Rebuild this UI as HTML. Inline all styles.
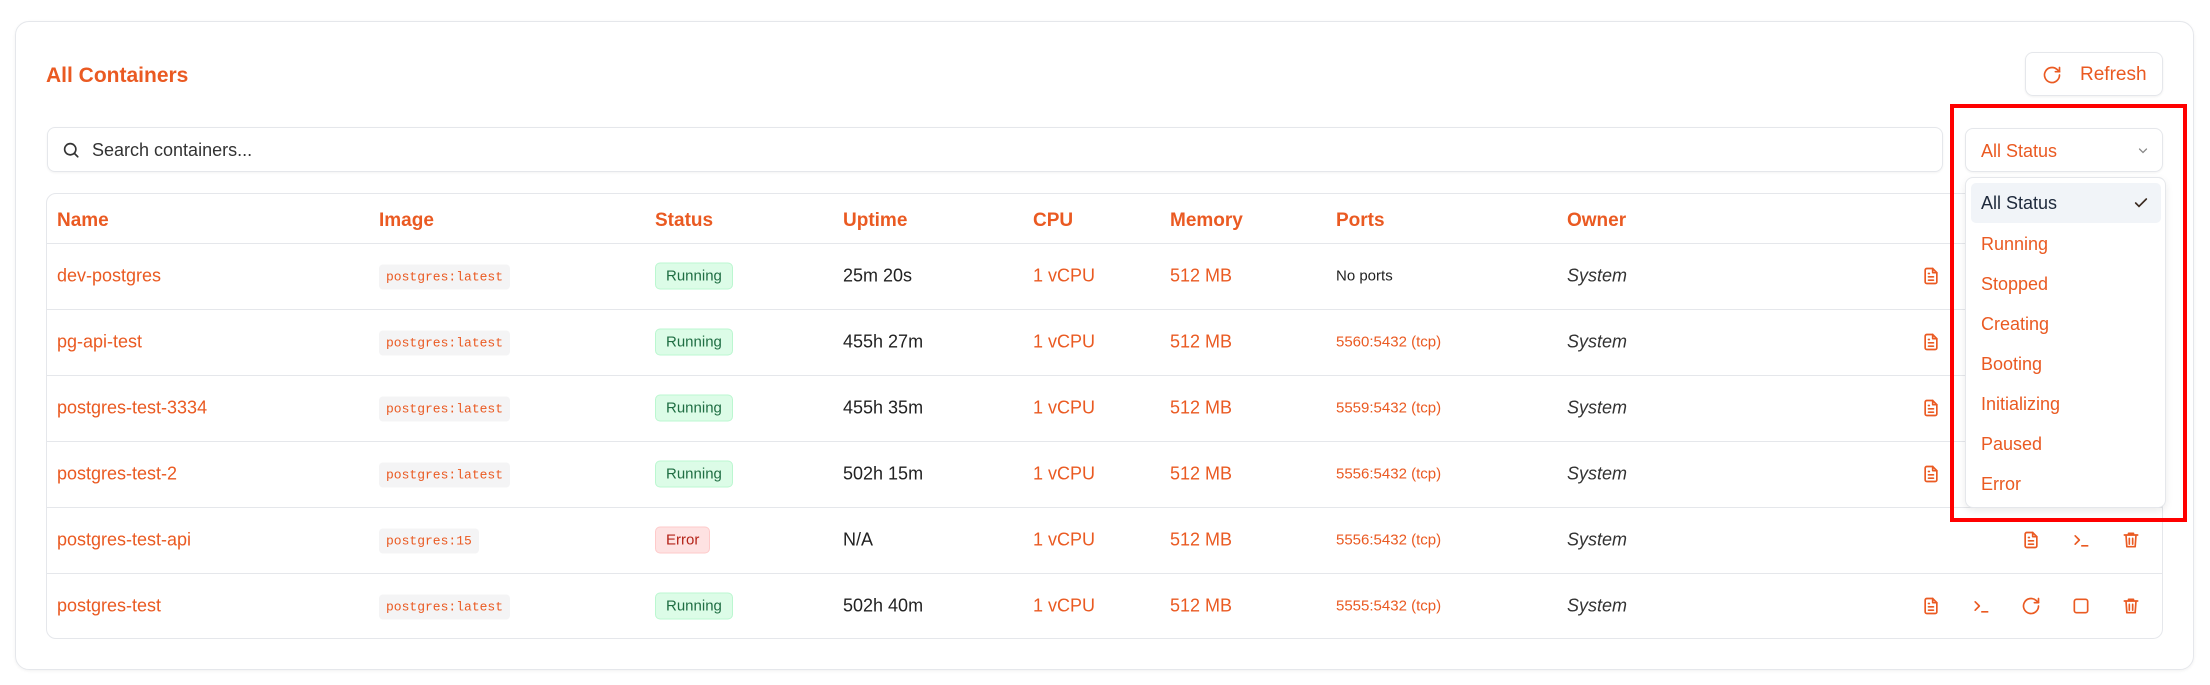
<!DOCTYPE html>
<html><head><meta charset="utf-8"><style>
*{box-sizing:border-box;margin:0;padding:0}
body{width:2210px;height:685px;background:#fff;font-family:"Liberation Sans",sans-serif;position:relative;overflow:hidden;color:#222}
.card{position:absolute;left:15px;top:21px;width:2179px;height:649px;border:1px solid #e5e7eb;border-radius:14px;box-shadow:0 1px 3px rgba(0,0,0,.06)}
.o{color:#ea5a22}
.abs{position:absolute}
.title{left:46px;top:64px;font-size:21px;font-weight:600;color:#ea5a22}
.btn{left:2025px;top:52px;width:138px;height:44px;border:1px solid #e5e7eb;border-radius:8px;box-shadow:0 1px 2px rgba(0,0,0,.06);color:#ea5a22;font-size:19px}
.search{left:47px;top:127px;width:1896px;height:45px;border:1px solid #e5e7eb;border-radius:8px;box-shadow:0 1px 2px rgba(0,0,0,.05);font-size:18px;color:#333}
.table{left:46px;top:193px;width:2117px;height:446px;border:1px solid #e5e7eb;border-radius:10px}
.hl{position:absolute;left:0;right:0;height:1px;background:#e5e7eb}
.th{position:absolute;font-size:19px;font-weight:600;color:#ea5a22;top:16px}
.cell{position:absolute;font-size:18px;transform:translateY(-50%)}
.img{font-family:"Liberation Mono",monospace;font-size:13px;color:#ea5a22;background:#f4f4f5;padding:5px 7px;border-radius:4px}
.run{font-size:15px;color:#1f6e43;background:#dcfce7;border:1px solid #bbf7d0;padding:4px 10px;border-radius:5px}
.err{font-size:15px;color:#b42318;background:#fee2e2;border:1px solid #fecaca;padding:4px 10px;border-radius:5px}
.port{font-size:15px}
.own{font-style:italic;font-size:18px;color:#333}
.ic{position:absolute;width:20px;height:20px;transform:translate(-50%,-50%)}
.sel{left:1965px;top:128px;width:198px;height:44px;border:1px solid #e5e7eb;border-radius:8px;box-shadow:0 1px 2px rgba(0,0,0,.05);color:#ea5a22;font-size:18px}
.dd{left:1965px;top:177px;width:201px;height:331px;background:#fff;border:1px solid #e5e7eb;border-radius:8px;box-shadow:0 3px 8px rgba(0,0,0,.08)}
.it{position:absolute;left:5px;width:190px;height:40px;line-height:40px;padding-left:10px;font-size:18px;color:#ea5a22}
.red{left:1950px;top:104px;width:237px;height:418px;border:4px solid #f00}
</style></head><body>
<div class="card"></div>
<div class="abs title">All Containers</div>
<div class="abs btn">
<svg class="abs" style="left:16px;top:12px" width="20" height="20" viewBox="0 0 24 24" fill="none" stroke="#ea5a22" stroke-width="2" stroke-linecap="round"><path d="M21 12a9 9 0 1 1-3-6.7L21 8"/><path d="M21 3v5h-5"/></svg>
<span class="abs" style="left:54px;top:11px">Refresh</span></div>
<div class="abs search">
<svg class="abs" style="left:14px;top:13px" width="18" height="18" viewBox="0 0 24 24" fill="none" stroke="#333" stroke-width="2.2" stroke-linecap="round"><circle cx="11" cy="11" r="7.5"/><path d="M21 21l-4.5-4.5"/></svg>
<span class="abs" style="left:44px;top:12px">Search containers...</span></div>

<div class="abs table">
<div class="th" style="left:10px">Name</div><div class="th" style="left:332px">Image</div><div class="th" style="left:608px">Status</div><div class="th" style="left:796px">Uptime</div><div class="th" style="left:986px">CPU</div><div class="th" style="left:1123px">Memory</div><div class="th" style="left:1289px">Ports</div><div class="th" style="left:1520px">Owner</div>
<div class="hl" style="top:49px"></div><div class="hl" style="top:115px"></div><div class="hl" style="top:181px"></div><div class="hl" style="top:247px"></div><div class="hl" style="top:313px"></div><div class="hl" style="top:379px"></div>
</div>

<div id="rows"></div>
<script>
const rows=[["dev-postgres","postgres:latest","Running","25m 20s","No ports",0],
["pg-api-test","postgres:latest","Running","455h 27m","5560:5432 (tcp)",0],
["postgres-test-3334","postgres:latest","Running","455h 35m","5559:5432 (tcp)",0],
["postgres-test-2","postgres:latest","Running","502h 15m","5556:5432 (tcp)",0],
["postgres-test-api","postgres:15","Error","N/A","5556:5432 (tcp)",1],
["postgres-test","postgres:latest","Running","502h 40m","5555:5432 (tcp)",2]];
const S='fill="none" stroke="#ea5a22" stroke-width="2" stroke-linecap="round" stroke-linejoin="round"';
const file=`<path d="M14 3H7a2 2 0 0 0-2 2v14a2 2 0 0 0 2 2h10a2 2 0 0 0 2-2V8z"/><path d="M14 3v5h5"/><path d="M9 13h6M9 17h6M9 9h1"/>`;
const term=`<path d="M5 7l5 5-5 5"/><path d="M13 19h7"/>`;
const rest=`<path d="M21 12a9 9 0 1 1-3-6.7L21 8"/><path d="M21 3v5h-5"/>`;
const stop=`<rect x="4" y="4" width="16" height="16" rx="2.5"/>`;
const trash=`<path d="M4 6h16M9 6V4h6v2M6 6l1 14h10l1-14M10 10v7M14 10v7"/>`;
function ic(x,y,p){return `<svg class="ic" style="left:${x}px;top:${y}px" viewBox="0 0 24 24" ${S}>${p}</svg>`}
let h='';
rows.forEach((r,i)=>{const y=276+i*66;
h+=`<div class="abs cell o" style="left:57px;top:${y}px">${r[0]}</div>`;
h+=`<div class="abs cell img" style="left:379px;top:${y+1}px">${r[1]}</div>`;
h+=`<div class="abs cell ${r[2]=='Error'?'err':'run'}" style="left:655px;top:${y}px">${r[2]}</div>`;
h+=`<div class="abs cell" style="left:843px;top:${y}px;color:#222">${r[3]}</div>`;
h+=`<div class="abs cell o" style="left:1033px;top:${y}px">1 vCPU</div>`;
h+=`<div class="abs cell o" style="left:1170px;top:${y}px">512 MB</div>`;
h+=`<div class="abs cell port" style="left:1336px;top:${y}px;color:${r[4]=='No ports'?'#222':'#ea5a22'}">${r[4]}</div>`;
h+=`<div class="abs cell own" style="left:1567px;top:${y}px">System</div>`;
if(r[5]==1){h+=ic(2031,y,file)+ic(2081,y,term)+ic(2131,y,trash);}
else{h+=ic(1931,y,file)+ic(1981,y,term)+ic(2031,y,rest)+ic(2081,y,stop)+ic(2131,y,trash);}
});
document.getElementById('rows').innerHTML=h;
</script>

<div class="abs sel"><span class="abs" style="left:15px;top:12px">All Status</span>
<svg class="abs" style="left:170px;top:16px" width="14" height="12" viewBox="0 0 24 24" fill="none" stroke="#888" stroke-width="2.5" stroke-linecap="round"><path d="M5 8l7 7 7-7"/></svg></div>
<div class="abs dd">
<div class="it" style="top:5px;background:#f1f4f8;color:#1e293b;border-radius:5px">All Status
<svg class="abs" style="left:162px;top:12px" width="16" height="16" viewBox="0 0 24 24" fill="none" stroke="#3b2a20" stroke-width="2.5" stroke-linecap="round"><path d="M4 12l5 5L20 6"/></svg></div>
<div class="it" style="top:46px">Running</div><div class="it" style="top:86px">Stopped</div><div class="it" style="top:126px">Creating</div><div class="it" style="top:166px">Booting</div><div class="it" style="top:206px">Initializing</div><div class="it" style="top:246px">Paused</div><div class="it" style="top:286px">Error</div>
</div>
<div class="abs red"></div>
</body></html>
